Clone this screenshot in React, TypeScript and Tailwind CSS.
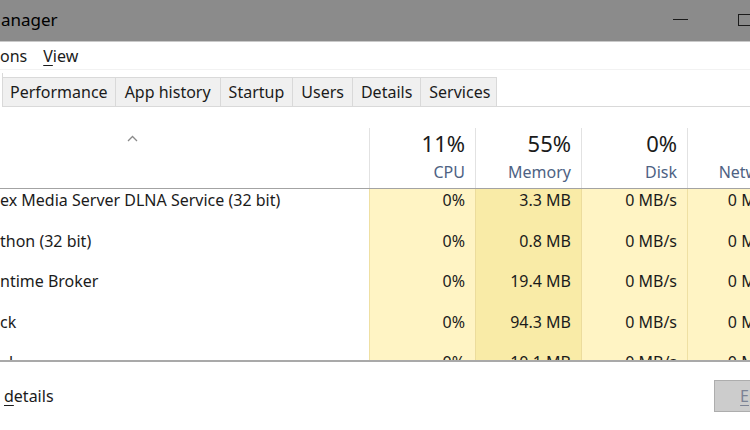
import React from "react";

const rows = [
  { name: "ex Media Server DLNA Service (32 bit)", cpu: "0%", mem: "3.3 MB", disk: "0 MB/s", net: "0 Mbps" },
  { name: "thon (32 bit)", cpu: "0%", mem: "0.8 MB", disk: "0 MB/s", net: "0 Mbps" },
  { name: "ntime Broker", cpu: "0%", mem: "19.4 MB", disk: "0 MB/s", net: "0 Mbps" },
  { name: "ck", cpu: "0%", mem: "94.3 MB", disk: "0 MB/s", net: "0 Mbps" },
  { name: "l", cpu: "0%", mem: "10.1 MB", disk: "0 MB/s", net: "0 Mbps" },
];

const tabs = [
  { t: "Performance", p: "pl-[7px] pr-[7px]" },
  { t: "App history", p: "pl-[9px] pr-[9px]" },
  { t: "Startup", p: "px-[8px]" },
  { t: "Users", p: "px-[8px]" },
  { t: "Details", p: "px-[8px]" },
  { t: "Services", p: "pl-[8px] pr-[6px]" },
];

export default function App() {
  return (
    <div className="w-[750px] h-[430px] overflow-hidden bg-white">
      <div className="w-[830px] h-[430px] flex flex-col font-['Noto_Sans',sans-serif] text-[#1b1b1b]">
        {/* Title bar */}
        <div className="h-[42px] shrink-0 bg-[#8b8b8b] border-b border-[#c9c9c9] flex items-center">
          <span className="text-[17px] leading-[24px] text-black pl-[1px] pb-[2px]">anager</span>
          <div className="flex-1" />
          <div className="w-[15px] h-px bg-[#1b1b1b] mb-[2px]" />
          <div className="ml-[50px] w-[13px] h-[12px] border border-[#1b1b1b] mr-[79px] mb-[2px]" />
        </div>

        {/* Menu bar */}
        <div className="h-[28px] shrink-0 flex items-center text-[16px] border-b border-[#f2f2f2]">
          <span>ons</span>
          <span className="ml-[16px]">
            <span className="underline underline-offset-[3px]">V</span>iew
          </span>
        </div>

        {/* Tabs */}
        <div className="h-[37px] shrink-0 flex items-end border-b border-[#d9d9d9] text-[16px]">
          <div className="w-[3px] h-[34px] bg-white border-r border-[#d9d9d9] -mb-px" />
          {tabs.map(({ t, p }) => (
            <div
              key={t}
              className={`h-[29px] ${p} flex items-center bg-[#f0f0f0] border-t border-r border-[#d9d9d9] leading-none`}
            >
              {t}
            </div>
          ))}
        </div>

        {/* Header */}
        <div className="h-[82px] shrink-0 flex border-b border-[#a3a3a3]">
          <div className="w-[369px] shrink-0 relative">
            <svg className="absolute left-[127px] top-[28px]" width="11" height="7" viewBox="0 0 11 7">
              <path d="M1 6 L5.5 1.5 L10 6" fill="none" stroke="#8a8a8a" strokeWidth="1.3" />
            </svg>
          </div>
          {[
            ["11%", "CPU"],
            ["55%", "Memory"],
            ["0%", "Disk"],
            ["0%", "Network"],
          ].map(([p, l]) => (
            <div
              key={l}
              className="w-[106px] shrink-0 mt-[21px] border-l border-[#e2e2e2] flex flex-col items-end pr-[10px]"
            >
              <span className="text-[22px] leading-[30px] text-[#1b1b1b]">{p}</span>
              <span className="text-[16px] leading-[28px] text-[#4e6283]">{l}</span>
            </div>
          ))}
        </div>

        {/* Rows */}
        <div className="h-[171px] shrink-0 overflow-hidden flex flex-col text-[16px]">
          {rows.map((r, i) => (
            <div key={i} className="h-[40.5px] shrink-0 flex">
              <div className={`w-[369px] shrink-0 leading-[22px] ${i === 4 ? "pl-[9px]" : "pl-0"}`}>{r.name}</div>
              <div className="w-[106px] shrink-0 bg-[#fff4c4] border-l border-[#efe0a3] text-right pr-[10px] leading-[22px]">
                {r.cpu}
              </div>
              <div className="w-[106px] shrink-0 bg-[#f9eba7] border-l border-[#ecdc9c] text-right pr-[10px] leading-[22px]">
                {r.mem}
              </div>
              <div className="w-[106px] shrink-0 bg-[#fff4c4] border-l border-[#ecdc9c] text-right pr-[10px] leading-[22px]">
                {r.disk}
              </div>
              <div className="w-[106px] shrink-0 bg-[#fff4c4] border-l border-[#efe0a3] text-right pr-[10px] leading-[22px]">
                {r.net}
              </div>
            </div>
          ))}
        </div>

        {/* Footer */}
        <div className="flex-1 border-t-2 border-[#a9a9a9] flex items-center">
          <span className="ml-[4px] text-[16px]">
            <span className="underline underline-offset-[3px]">d</span>etails
          </span>
          <div className="flex-1" />
          <div className="w-[116px] h-[32px] bg-[#cccccc] border border-[#adadad] flex items-center justify-center text-[16px] text-[#7b8294]">
            <span>
              <span className="underline underline-offset-[3px]">E</span>nd task
            </span>
          </div>
        </div>
      </div>
    </div>
  );
}
